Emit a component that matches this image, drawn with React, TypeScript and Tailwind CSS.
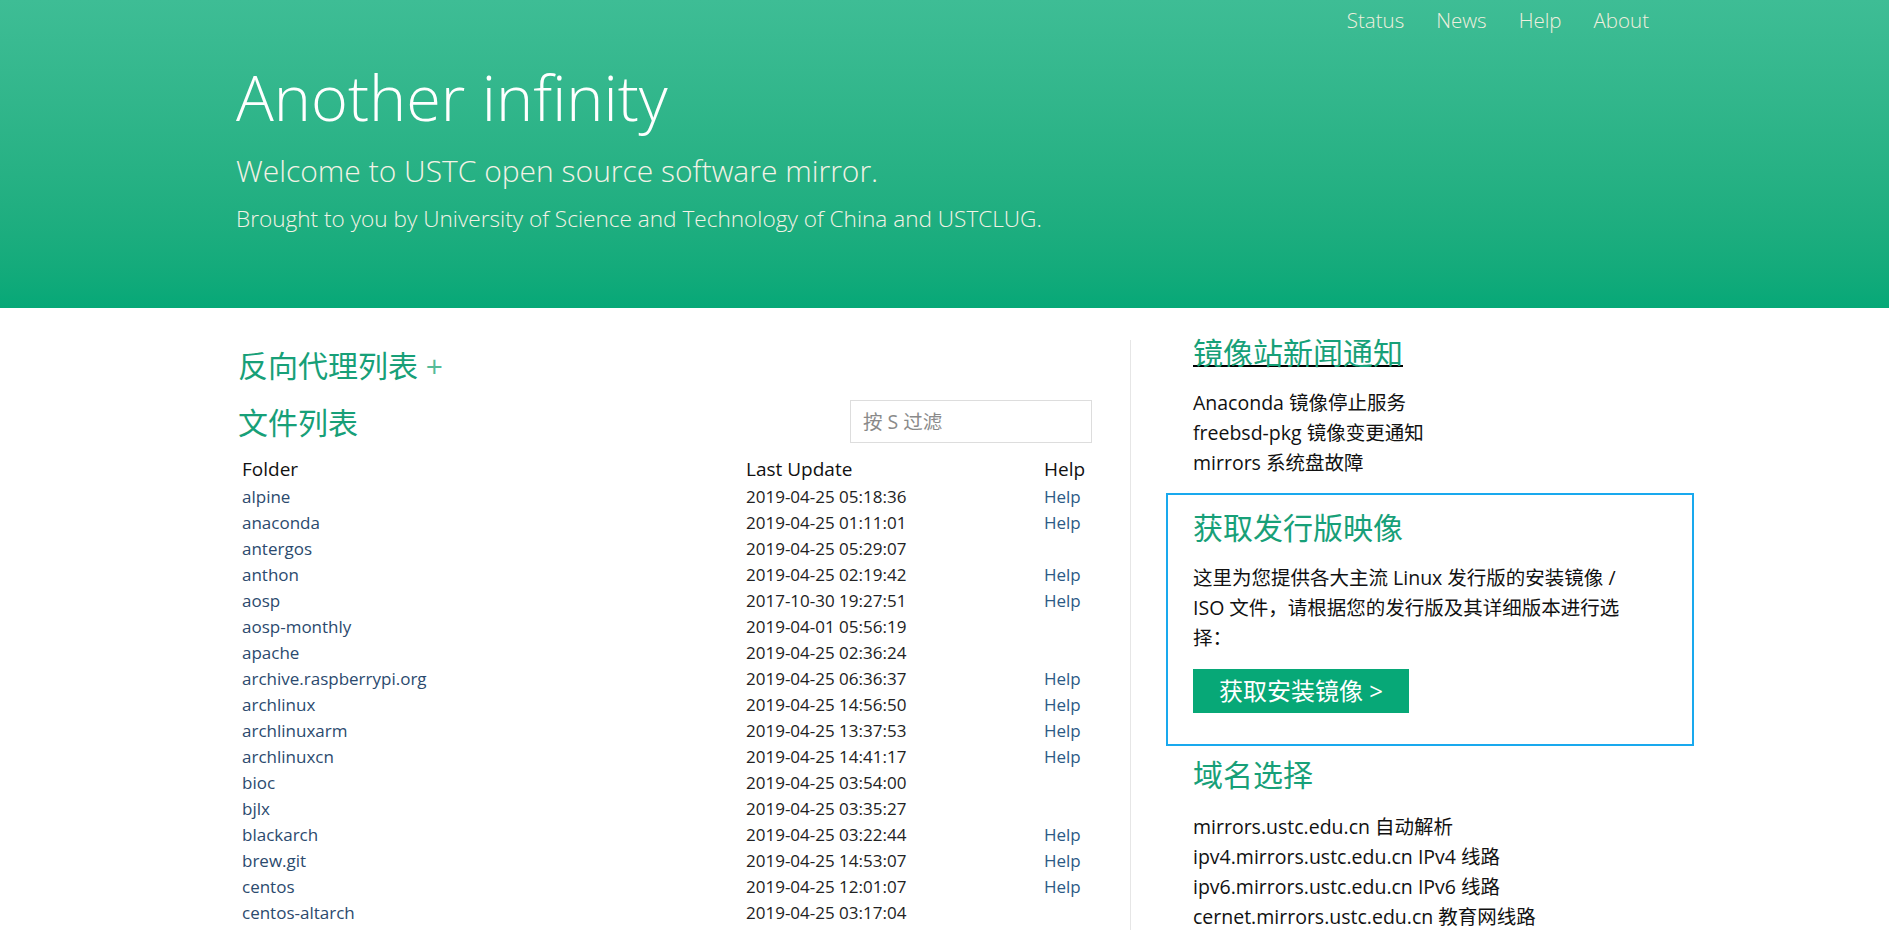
const rows: [string, string, boolean][] = [
  ["alpine", "2019-04-25 05:18:36", true],
  ["anaconda", "2019-04-25 01:11:01", true],
  ["antergos", "2019-04-25 05:29:07", false],
  ["anthon", "2019-04-25 02:19:42", true],
  ["aosp", "2017-10-30 19:27:51", true],
  ["aosp-monthly", "2019-04-01 05:56:19", false],
  ["apache", "2019-04-25 02:36:24", false],
  ["archive.raspberrypi.org", "2019-04-25 06:36:37", true],
  ["archlinux", "2019-04-25 14:56:50", true],
  ["archlinuxarm", "2019-04-25 13:37:53", true],
  ["archlinuxcn", "2019-04-25 14:41:17", true],
  ["bioc", "2019-04-25 03:54:00", false],
  ["bjlx", "2019-04-25 03:35:27", false],
  ["blackarch", "2019-04-25 03:22:44", true],
  ["brew.git", "2019-04-25 14:53:07", true],
  ["centos", "2019-04-25 12:01:07", true],
  ["centos-altarch", "2019-04-25 03:17:04", false],
];

const news = ["Anaconda 镜像停止服务", "freebsd-pkg 镜像变更通知", "mirrors 系统盘故障"];

const domains: [string, string][] = [
  ["mirrors.ustc.edu.cn", "自动解析"],
  ["ipv4.mirrors.ustc.edu.cn", "IPv4 线路"],
  ["ipv6.mirrors.ustc.edu.cn", "IPv6 线路"],
  ["cernet.mirrors.ustc.edu.cn", "教育网线路"],
];

export default function App() {
  return (
    <div className="min-h-screen bg-white font-['Open_Sans','Noto_Sans_CJK_SC',sans-serif]">
      {/* Hero */}
      <header className="h-[308px] bg-gradient-to-b from-[#3ebd95] to-[#06a877]">
        <div className="ml-[236px] w-[1458px]">
          <nav className="flex justify-end gap-[32px] pr-[45px] pt-[6px] text-[20.5px] leading-[28px] font-light text-[#f0efdf]">
            <a href="#">Status</a>
            <a href="#">News</a>
            <a href="#">Help</a>
            <a href="#">About</a>
          </nav>
          <h1 className="mt-[23px] text-[63px] leading-[80px] font-light text-white">Another infinity</h1>
          <p className="mt-[14px] text-[30px] leading-[40px] font-light text-[#f3f2e6]">
            Welcome to USTC open source software mirror.
          </p>
          <p className="mt-[12px] text-[22.6px] leading-[32px] font-light text-[#f3f2e6]">
            Brought to you by University of Science and Technology of China and USTCLUG.
          </p>
        </div>
      </header>

      <main className="ml-[236px] flex w-[1458px]">
        {/* Left: file list */}
        <div className="w-[858px] pt-[38px]">
          <h2 className="pl-[2px] text-[30px] leading-[40px] text-[#17a078]">
            反向代理列表 <span className="text-[#55bb98]">+</span>
          </h2>
          <div className="mt-[14px] flex items-start justify-between pr-[2px]">
            <h2 className="mt-[3px] pl-[2px] text-[30px] leading-[40px] text-[#17a078]">文件列表</h2>
            <input
              placeholder="按 S 过滤"
              className="h-[43px] w-[242px] border border-[#dddddd] px-[12px] text-[19.5px] text-[#333] placeholder-[#8a8a8a] outline-none"
            />
          </div>
          <div className="mt-[12px]">
            <div className="flex h-[29px] pl-[6px] text-[19px] leading-[28px] text-[#111]">
              <span className="w-[504px]">Folder</span>
              <span className="w-[298px]">Last Update</span>
              <span>Help</span>
            </div>
            {rows.map(([name, date, help]) => (
              <div key={name} className="flex h-[26px] pl-[6px] text-[17px] leading-[26px]">
                <a href="#" className="w-[504px] text-[#2b4a6e]">
                  {name}
                </a>
                <span className="w-[298px] text-[#222]">{date}</span>
                {help && (
                  <a href="#" className="text-[#2c5a86]">
                    Help
                  </a>
                )}
              </div>
            ))}
          </div>
        </div>

        {/* Divider */}
        <div className="ml-[36px] mt-[32px] w-px self-stretch bg-[#e6e6e6]" />

        {/* Right: news, ISO box, domains */}
        <div className="ml-[35px] w-[528px] pt-[25px]">
          <div className="pl-[27px]">
            <a href="#" className="text-[30px] leading-[40px] text-[#17a078] underline decoration-black decoration-2">
              镜像站新闻通知
            </a>
            <ul className="mt-[15px] text-[19.5px] leading-[30px] text-[#111]">
              {news.map((n) => (
                <li key={n}>{n}</li>
              ))}
            </ul>
          </div>

          <div className="mt-[15px] border-2 border-[#19a9ee] px-[25px] pb-[31px] pt-[13px]">
            <h2 className="text-[30px] leading-[40px] text-[#17a078]">获取发行版映像</h2>
            <p className="mt-[15px] w-[452px] text-[19.5px] leading-[30px] text-[#111]">
              这里为您提供各大主流 Linux 发行版的安装镜像 / ISO 文件，请根据您的发行版及其详细版本进行选择：
            </p>
            <button className="mt-[16px] h-[44px] bg-[#07a877] px-[26px] text-[24px] leading-[44px] text-white">
              获取安装镜像 &gt;
            </button>
          </div>

          <div className="pl-[27px]">
            <h2 className="mt-[9px] text-[30px] leading-[40px] text-[#17a078]">域名选择</h2>
            <ul className="mt-[17px] text-[19.5px] leading-[30px] text-[#111]">
              {domains.map(([d, t]) => (
                <li key={d}>
                  {d} {t}
                </li>
              ))}
            </ul>
          </div>
        </div>
      </main>
    </div>
  );
}
